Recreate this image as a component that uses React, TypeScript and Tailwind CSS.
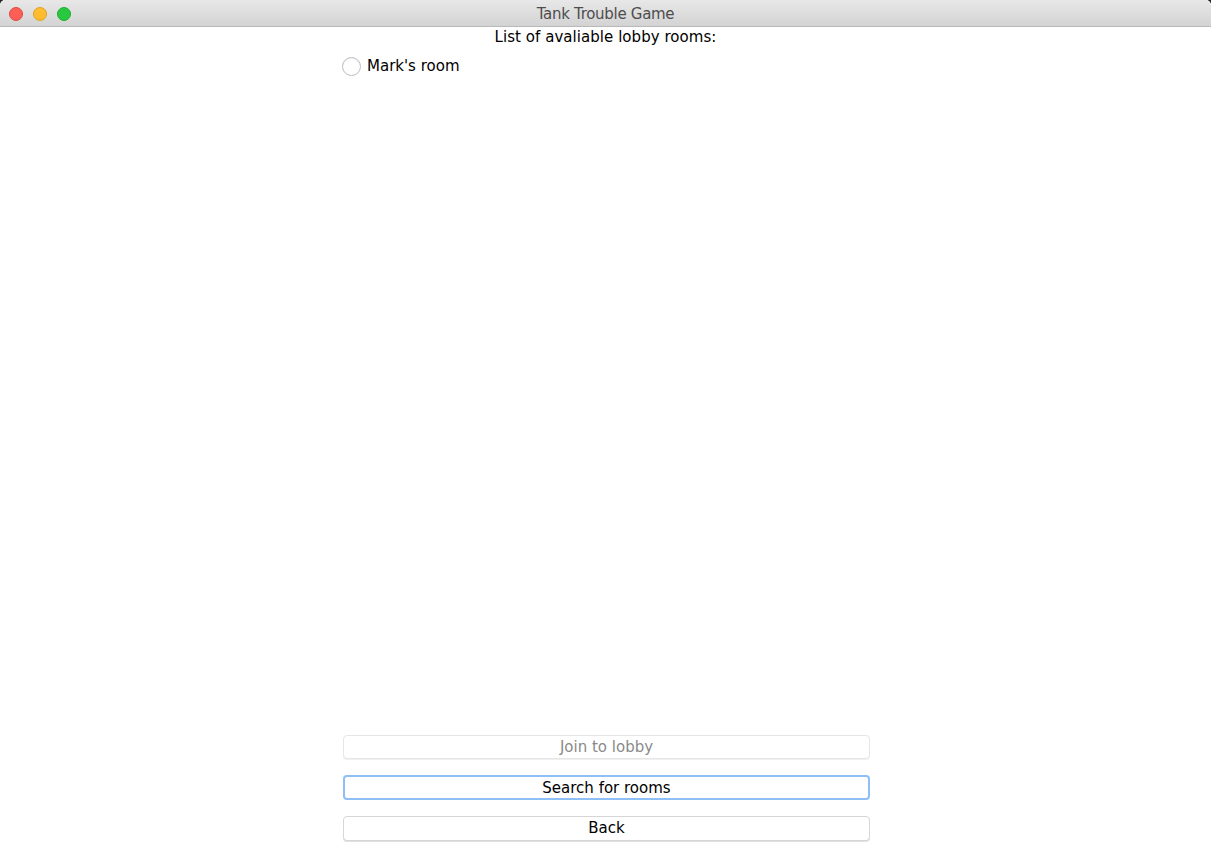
import React from 'react';

const font = { fontFamily: '"DejaVu Sans", "Noto Sans", sans-serif' };

function TitleBar() {
  return (
    <div className="relative h-[27px] flex items-center justify-center border-b border-[#b9b9b9] bg-gradient-to-b from-[#e8e8e8] to-[#d3d3d3] rounded-t-[5px]">
      <div className="absolute left-[9px] top-[7px] flex gap-[10px]">
        <span className="block w-[14px] h-[14px] rounded-full bg-[#fd5f57] border border-[#e14942]" />
        <span className="block w-[14px] h-[14px] rounded-full bg-[#febc2e] border border-[#dfa023]" />
        <span className="block w-[14px] h-[14px] rounded-full bg-[#28c840] border border-[#1dad2b]" />
      </div>
      <span className="text-[15px] text-[#4d4d4d] tracking-[-0.3px] pt-[2px]">Tank Trouble Game</span>
    </div>
  );
}

export default function App() {
  return (
    <div className="w-[1211px] h-[851px] bg-[#222] overflow-hidden" style={font}>
      <div className="h-full flex flex-col bg-white rounded-t-[5px] overflow-hidden">
        <TitleBar />
        <div className="flex-1 flex flex-col">
          <div className="text-center text-[15px] text-black leading-[20px] tracking-[0.05px] font-medium">
            List of avaliable lobby rooms:
          </div>
          <div className="flex">
            <label className="ml-[342px] mt-[8px] flex items-center gap-[6px]">
              <span className="block w-[19px] h-[19px] rounded-full border border-[#bdbdbd] bg-white shadow-[inset_0_1px_1px_rgba(0,0,0,0.05)]" />
              <span className="text-[15px] text-black font-medium">Mark's room</span>
            </label>
          </div>
          <div className="flex-1" />
          <div className="flex flex-col gap-[16px] ml-[343px] w-[527px] pb-[10px]">
            <button className="h-[24px] rounded-[4px] border border-[#e6e6e6] bg-white text-[15px] text-[#8a8a8a] shadow-[0_1px_0_rgba(0,0,0,0.06)]">
              Join to lobby
            </button>
            <button className="h-[25px] rounded-[4px] border-2 border-[#8ebff7] bg-white text-[15px] text-black font-medium">
              Search for rooms
            </button>
            <button className="h-[25px] rounded-[4px] border border-[#d6d6d6] bg-white text-[15px] text-black font-medium shadow-[0_1px_0_rgba(0,0,0,0.12)]">
              Back
            </button>
          </div>
        </div>
      </div>
    </div>
  );
}
